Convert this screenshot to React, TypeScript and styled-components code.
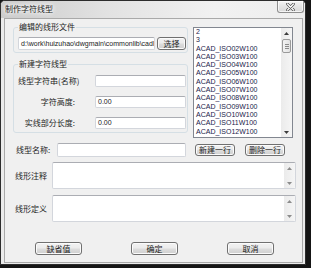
import React from 'react'
import styled, { createGlobalStyle } from 'styled-components'

const GlobalStyle = createGlobalStyle`
  html, body {
    margin: 0;
    padding: 0;
    background: #161616;
  }
  body {
    font-family: "Noto Sans CJK SC", "Liberation Sans", sans-serif;
  }
`

const Screen = styled.div`
  width: 311px;
  height: 268px;
  background: #151515;
  overflow: hidden;
`

const Window = styled.div`
  width: 306px;
  height: 265px;
  box-sizing: border-box;
  border: 1px solid #2c2c2c;
  border-radius: 5px 5px 0 0;
  background: #ebebeb;
  display: flex;
  flex-direction: column;
`

const TitleBar = styled.div`
  height: 17px;
  flex: none;
  display: flex;
  justify-content: space-between;
  align-items: flex-start;
  padding-left: 4px;
  border-radius: 4px 4px 0 0;
  background: linear-gradient(to right, #cbcbcb, #e2e2e2 35%, #f1f1f1 70%, #eeeeee);
`

const Title = styled.span`
  margin-top: 3px;
  font-size: 8px;
  line-height: 10px;
  color: #1c1c1c;
  text-shadow: 0 0 3px #ffffff, 0 0 5px #ffffff, 0 0 7px #ffffff;
`

const CloseButton = styled.div`
  width: 27px;
  height: 12px;
  margin-right: 1px;
  box-sizing: border-box;
  border: 1px solid #8e8e8e;
  border-top: none;
  border-radius: 0 0 3px 3px;
  background: linear-gradient(#f5f5f5, #e4e4e4 50%, #d9d9d9);
  box-shadow: inset 0 0 0 1px rgba(255, 255, 255, 0.7);
  display: flex;
  align-items: center;
  justify-content: center;
`

const Client = styled.div`
  flex: 1;
  margin: 0 2px 1px 3px;
  border: 1px solid #a9a9a9;
  background: #f0f0f0;
  display: flex;
  flex-direction: column;
  color: #1e1e1e;
  font-size: 8px;
`

const TopSection = styled.div`
  display: flex;
  align-items: flex-start;
  padding: 3px 0 0 8px;
`

const LeftColumn = styled.div`
  width: 175px;
  display: flex;
  flex-direction: column;
  gap: 6px;
`

const Group = styled.fieldset<{ $pt: number; $pb: number }>`
  margin: 0;
  min-width: 0;
  padding: ${(p) => p.$pt}px 2px ${(p) => p.$pb}px 4px;
  border: 1px solid #d5dfe5;
  border-radius: 3px;
`

const Legend = styled.legend`
  padding: 0 1px;
  font-size: 8px;
  line-height: 10px;
  color: #1e1e1e;
`

const FileRow = styled.div`
  display: flex;
  align-items: center;
  gap: 2px;
`

const Field = styled.div<{ $w: number; $h: number }>`
  width: ${(p) => p.$w}px;
  height: ${(p) => p.$h}px;
  flex: none;
  box-sizing: border-box;
  border: 1px solid #d3d6dc;
  border-top-color: #abadb3;
  border-radius: 2px;
  background: #ffffff;
  padding-left: 2px;
  font-family: "Liberation Sans", Arial, sans-serif;
  font-size: 7px;
  line-height: ${(p) => p.$h - 2}px;
  color: #222;
  white-space: nowrap;
  overflow: hidden;
`

const Button = styled.div<{ $w: number; $h: number }>`
  width: ${(p) => p.$w}px;
  height: ${(p) => p.$h}px;
  flex: none;
  box-sizing: border-box;
  border: 1px solid #707070;
  border-radius: 3px;
  background: linear-gradient(#f2f2f2 0%, #ebebeb 48%, #dddddd 52%, #cfcfcf 100%);
  box-shadow: inset 0 0 0 1px #fbfbfb;
  display: flex;
  align-items: center;
  justify-content: center;
  font-size: 8px;
  line-height: 10px;
  color: #1e1e1e;
`

const FormGrid = styled.div`
  display: grid;
  grid-template-columns: 77px 91px;
  row-gap: 9px;
  align-items: center;
`

const FormLabel = styled.span<{ $right?: boolean }>`
  text-align: ${(p) => (p.$right ? 'right' : 'left')};
  padding-right: ${(p) => (p.$right ? 20 : 0)}px;
  line-height: 10px;
  white-space: nowrap;
`

const ListBox = styled.div`
  margin: 5px 0 0 5px;
  width: 100px;
  height: 111px;
  box-sizing: border-box;
  border: 1px solid #828790;
  background: #ffffff;
  display: flex;
  overflow: hidden;
`

const ListItems = styled.div`
  flex: 1;
  padding-left: 2px;
  font-family: "Liberation Sans", Arial, sans-serif;
  font-size: 7px;
  line-height: 8.3px;
  color: #22224a;
  white-space: nowrap;
  overflow: hidden;
`

const ScrollBar = styled.div`
  width: 11px;
  flex: none;
  display: flex;
  flex-direction: column;
  background: linear-gradient(to right, #ebebeb, #f5f5f5);
`

const ArrowCell = styled.div`
  height: 10px;
  flex: none;
  display: flex;
  align-items: center;
  justify-content: center;
`

const Thumb = styled.div`
  height: 14px;
  margin: 1px 1px 0 1px;
  box-sizing: border-box;
  border: 1px solid #9a9a9a;
  border-radius: 2px;
  background: linear-gradient(to right, #f3f3f3, #e2e2e2);
  display: flex;
  flex-direction: column;
  align-items: center;
  justify-content: center;
  gap: 1px;
`

const Grip = styled.div`
  width: 4px;
  height: 1px;
  background: #8a8a8a;
`

const Filler = styled.div`
  flex: 1;
`

const NameRow = styled.div`
  display: flex;
  align-items: center;
  margin-top: 5px;
  padding-left: 11px;
  height: 14px;
`

const NameLabel = styled.span`
  width: 41px;
  flex: none;
  line-height: 10px;
  white-space: nowrap;
`

const RowButtons = styled.div`
  display: flex;
  gap: 10px;
  margin-left: 9px;
`

const TextRows = styled.div`
  display: flex;
  flex-direction: column;
  gap: 6px;
  margin-top: 5px;
  padding-left: 10px;
`

const TextRow = styled.div`
  display: flex;
  align-items: center;
`

const TextLabel = styled.span`
  width: 37px;
  flex: none;
  line-height: 10px;
  white-space: nowrap;
`

const TextArea = styled.div`
  width: 244px;
  height: 27px;
  box-sizing: border-box;
  border: 1px solid #d3d6dc;
  border-top-color: #abadb3;
  border-radius: 2px;
  background: #ffffff;
  display: flex;
  justify-content: flex-end;
  overflow: hidden;
`

const ButtonRow = styled.div`
  display: flex;
  gap: 49px;
  margin-top: 20px;
  padding-left: 30px;
`

const Arrow = ({ up, color }: { up: boolean; color: string }) => (
  <svg width="5" height="3" viewBox="0 0 5 3">
    <polygon points={up ? '0,3 5,3 2.5,0' : '0,0 5,0 2.5,3'} fill={color} />
  </svg>
)

const CloseGlyph = () => (
  <svg width="9" height="8" viewBox="0 0 9 8">
    <path d="M1.5 1 L7.5 7 M7.5 1 L1.5 7" stroke="#4a4a4a" strokeWidth="2.6" strokeLinecap="round" />
    <path d="M1.5 1 L7.5 7 M7.5 1 L1.5 7" stroke="#ffffff" strokeWidth="1.3" strokeLinecap="round" />
  </svg>
)

const lineTypes = [
  '2',
  '3',
  'ACAD_ISO02W100',
  'ACAD_ISO03W100',
  'ACAD_ISO04W100',
  'ACAD_ISO05W100',
  'ACAD_ISO06W100',
  'ACAD_ISO07W100',
  'ACAD_ISO08W100',
  'ACAD_ISO09W100',
  'ACAD_ISO10W100',
  'ACAD_ISO11W100',
  'ACAD_ISO12W100',
]

const App = () => {
  return (
    <>
      <GlobalStyle />
      <Screen>
        <Window>
          <TitleBar>
            <Title>制作字符线型</Title>
            <CloseButton>
              <CloseGlyph />
            </CloseButton>
          </TitleBar>
          <Client>
            <TopSection>
              <LeftColumn>
                <Group $pt={5} $pb={2}>
                  <Legend>编辑的线形文件</Legend>
                  <FileRow>
                    <Field $w={137} $h={13}>
                      {'d:\\work\\huizuhao\\dwgmain\\commonlib\\cadl'}
                    </Field>
                    <Button $w={29} $h={13}>选择</Button>
                  </FileRow>
                </Group>
                <Group $pt={6} $pb={3}>
                  <Legend>新建字符线型</Legend>
                  <FormGrid>
                    <FormLabel>线型字符串(名称)</FormLabel>
                    <Field $w={91} $h={12} />
                    <FormLabel $right>字符高度:</FormLabel>
                    <Field $w={91} $h={12}>0.00</Field>
                    <FormLabel $right>实线部分长度:</FormLabel>
                    <Field $w={91} $h={12}>0.00</Field>
                  </FormGrid>
                </Group>
              </LeftColumn>
              <ListBox>
                <ListItems>
                  {lineTypes.map((name) => (
                    <div key={name}>{name}</div>
                  ))}
                </ListItems>
                <ScrollBar>
                  <ArrowCell>
                    <Arrow up color="#3c3c3c" />
                  </ArrowCell>
                  <Thumb>
                    <Grip />
                    <Grip />
                    <Grip />
                  </Thumb>
                  <Filler />
                  <ArrowCell>
                    <Arrow up={false} color="#3c3c3c" />
                  </ArrowCell>
                </ScrollBar>
              </ListBox>
            </TopSection>

            <NameRow>
              <NameLabel>线型名称:</NameLabel>
              <Field $w={129} $h={14} />
              <RowButtons>
                <Button $w={40} $h={12}>新建一行</Button>
                <Button $w={40} $h={12}>删除一行</Button>
              </RowButtons>
            </NameRow>

            <TextRows>
              {['线形注释', '线形定义'].map((label) => (
                <TextRow key={label}>
                  <TextLabel>{label}</TextLabel>
                  <TextArea>
                    <ScrollBar>
                      <ArrowCell>
                        <Arrow up color="#8c8c8c" />
                      </ArrowCell>
                      <Filler />
                      <ArrowCell>
                        <Arrow up={false} color="#8c8c8c" />
                      </ArrowCell>
                    </ScrollBar>
                  </TextArea>
                </TextRow>
              ))}
            </TextRows>

            <ButtonRow>
              <Button $w={47} $h={13}>缺省值</Button>
              <Button $w={47} $h={13}>确定</Button>
              <Button $w={47} $h={13}>取消</Button>
            </ButtonRow>
          </Client>
        </Window>
      </Screen>
    </>
  )
}

export default App
